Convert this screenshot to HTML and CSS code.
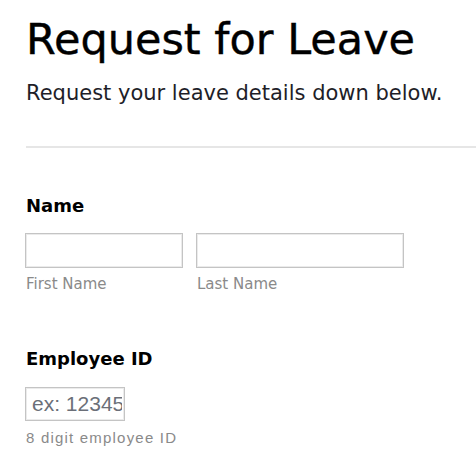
FILE: index.html
```html
<!DOCTYPE html>
<html>
<head>
<meta charset="utf-8">
<link rel="stylesheet" href="styles.css">
</head>
<body>
<div class="page">
  <header class="head">
    <h1 class="title">Request for Leave</h1>
    <p class="subtitle">Request your leave details down below.</p>
  </header>
  <div class="rule"></div>
  <section class="field field-name">
    <label class="label">Name</label>
    <div class="name-row">
      <div class="sub">
        <input class="input input-first" type="text">
        <span class="hint">First Name</span>
      </div>
      <div class="sub">
        <input class="input input-last" type="text">
        <span class="hint">Last Name</span>
      </div>
    </div>
  </section>
  <section class="field field-id">
    <label class="label">Employee ID</label>
    <input class="input input-id" type="text" placeholder="ex: 12345">
    <span class="hint hint-id">8 digit employee ID</span>
  </section>
</div>
</body>
</html>
```
FILE: styles.css
```css
html, body {
  margin: 0;
  padding: 0;
  background: #fff;
}
body {
  font-family: "DejaVu Sans", Verdana, sans-serif;
  color: #000;
  overflow: hidden;
}
.page {
  padding: 14px 0 0 26px;
}
.title {
  margin: 0;
  font-size: 43px;
  font-weight: normal;
  line-height: 50px;
  white-space: nowrap;
  -webkit-text-stroke: 0.4px #000;
}
.subtitle {
  margin: 17px 0 0;
  font-size: 21px;
  line-height: 24px;
  color: #1e1e28;
  white-space: nowrap;
}
.rule {
  margin-top: 41px;
  height: 2px;
  background: #e6e6e6;
}
.field-name {
  margin-top: 47px;
}
.label {
  display: block;
  font-size: 18px;
  font-weight: bold;
  line-height: 22px;
  color: #000;
}
.name-row {
  display: flex;
  gap: 14px;
  margin-top: 16px;
}
.sub {
  display: flex;
  flex-direction: column;
}
.input {
  box-sizing: border-box;
  height: 35px;
  margin: 0 0 0 -1px;
  padding: 0 6px;
  border: 1px solid #c4c4c4;
  box-shadow: inset 0 0 0 1px #ebebeb;
  background: #fff;
  outline: none;
  font-family: "Liberation Sans", Arial, sans-serif;
  font-size: 21px;
  color: #444;
}
.input-first { width: 158px; }
.input-last { width: 208px; }
.hint {
  margin-top: 7px;
  font-size: 15px;
  line-height: 18px;
  color: #8a8a8a;
}
.field-id {
  margin-top: 55px;
  display: flex;
  flex-direction: column;
  align-items: flex-start;
}
.field-id .label {
  margin-bottom: 17px;
}
.input-id {
  width: 100px;
  height: 34px;
  padding: 0 2px 0 6px;
}
.input-id::placeholder {
  color: #6b6f78;
  opacity: 1;
}
.hint-id {
  margin-top: 8px;
  font-family: "Liberation Sans", Arial, sans-serif;
  font-size: 15px;
  letter-spacing: 1.2px;
}
```
